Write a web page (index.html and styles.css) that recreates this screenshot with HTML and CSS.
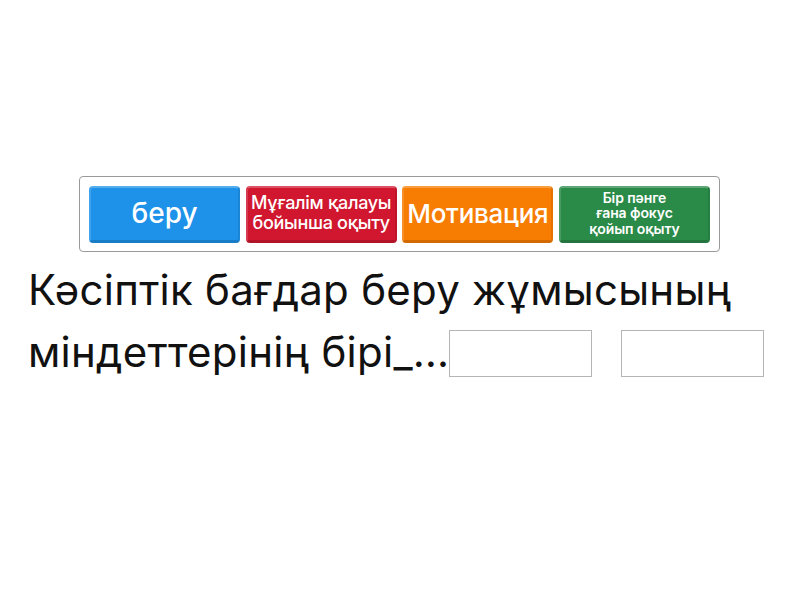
FILE: index.html
```html
<!DOCTYPE html>
<html lang="kk">
<head>
<meta charset="utf-8">
<link rel="stylesheet" href="styles.css">
</head>
<body>
<div class="page">
  <div class="bank">
    <div class="tile blue t-lg">беру</div>
    <div class="tile red t-md">Мұғалім қалауы бойынша оқыту</div>
    <div class="tile orange t-mlg">Мотивация</div>
    <div class="tile green t-sm">Бір пәнге<br>ғана фокус<br>қойып оқыту</div>
  </div>
  <div class="question">
    <span class="line">Кәсіптік бағдар беру жұмысының</span>
    <span class="line">міндеттерінің бірі_…<span class="slot first"></span><span class="slot second"></span></span>
  </div>
</div>
</body>
</html>
```

FILE: styles.css
```css
html, body {
  margin: 0;
  padding: 0;
  background: #fff;
}
body {
  font-family: Inter, "Noto Sans", "Liberation Sans", sans-serif;
  color: #111;
}
.page {
  padding-top: 176px;
}
.bank {
  margin-left: 79px;
  width: 621px;
  height: 56px;
  border: 1px solid #9a9a9a;
  border-radius: 4px;
  padding: 9px;
  display: flex;
  justify-content: space-between;
  box-sizing: content-box;
}
.tile {
  width: 151px;
  height: 57px;
  box-sizing: border-box;
  border-radius: 4px;
  color: #fff;
  display: flex;
  align-items: center;
  justify-content: center;
  text-align: center;
  border-top: 2px solid rgba(255,255,255,0.25);
  border-left: 2px solid rgba(255,255,255,0.15);
  border-right: 2px solid rgba(0,0,0,0.08);
  border-bottom: 3px solid rgba(0,0,0,0.15);
  padding-bottom: 2px;
}
.blue { background: #1e92e9; }
.red { background: #d0172f; }
.orange { background: #f77c02; }
.green { background: #2a8a48; }
.t-lg { font-size: 28px; font-weight: 500; }
.t-mlg { font-size: 26px; font-weight: 500; letter-spacing: -0.3px; white-space: nowrap; }
.t-md { font-size: 18px; font-weight: 500; line-height: 20px; letter-spacing: -0.3px; }
.t-sm { font-size: 14px; font-weight: 600; line-height: 15.5px; letter-spacing: -0.1px; }
.question {
  margin-left: 28px;
  margin-top: 7px;
  font-size: 42px;
  line-height: 62px;
  letter-spacing: 0.25px;
  display: flex;
  flex-direction: column;
}
.line {
  display: block;
  white-space: nowrap;
}
.slot {
  display: inline-block;
  width: 143px;
  height: 47px;
  box-sizing: border-box;
  border: 1px solid #b5b5b5;
  vertical-align: -10px;
  margin-left: 0;
}
.slot.second {
  margin-left: 29px;
}
```
